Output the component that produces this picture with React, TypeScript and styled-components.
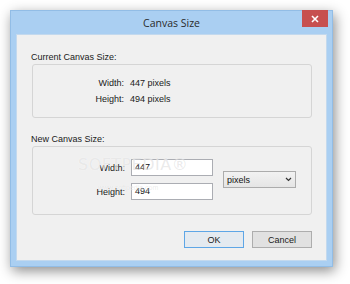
import styled, { createGlobalStyle } from 'styled-components'

const GlobalStyle = createGlobalStyle`
  html, body {
    margin: 0;
    padding: 0;
    background: #ffffff;
  }

  body {
    font-family: 'Liberation Sans', Arial, sans-serif;
  }
`

const Page = styled.div`
  width: 350px;
  height: 284px;
  padding: 10px 0 0 10px;
  box-sizing: border-box;
  overflow: hidden;
`

const Window = styled.div`
  position: relative;
  width: 323px;
  height: 257px;
  box-sizing: border-box;
  display: flex;
  flex-direction: column;
  background: #aacff2;
  border: 1px solid #92bde6;
  box-shadow: 2px 4px 12px rgba(0, 0, 0, 0.45);
`

const TitleBar = styled.div`
  height: 23px;
  display: grid;
  grid-template-columns: 1fr auto 1fr;
  align-items: start;
`

const Title = styled.div`
  grid-column: 2;
  padding-top: 5px;
  font-family: 'Open Sans', 'Noto Sans', sans-serif;
  font-size: 10.5px;
  line-height: 14px;
  color: #2b2b2b;
`

const CloseButton = styled.div`
  grid-column: 3;
  justify-self: end;
  width: 26px;
  height: 17px;
  margin-right: 4px;
  margin-top: -1px;
  background: #c75050;
  display: flex;
  align-items: center;
  justify-content: center;
`

const Client = styled.div`
  flex: 1;
  margin: 0 5px 5px 5px;
  padding: 15px 14px 0 15px;
  background: #f0f0f0;
  border: 1px solid #c3d9ee;
  box-sizing: border-box;
  display: flex;
  flex-direction: column;
  position: relative;
`

const SectionLabel = styled.div<{ $gap?: number }>`
  font-size: 9px;
  line-height: 14px;
  color: #1a1a1a;
  margin-left: -1px;
  margin-top: ${(p) => p.$gap ?? 0}px;
`

const Group = styled.div<{ $h: number; $pt: number }>`
  height: ${(p) => p.$h}px;
  box-sizing: border-box;
  border: 1px solid #d5d5d5;
  border-radius: 3px;
  padding-top: ${(p) => p.$pt}px;
`

const InfoGrid = styled.div`
  display: grid;
  grid-template-columns: 91px auto;
  column-gap: 6px;
  grid-auto-rows: 16px;
  align-items: center;
  font-size: 9px;
  color: #1a1a1a;
`

const RowLabel = styled.div`
  text-align: right;
`

const EditGrid = styled.div`
  display: grid;
  grid-template-columns: 92px 82px 77px;
  grid-template-rows: 17px 17px;
  column-gap: 6px;
  row-gap: 7px;
  align-items: center;
  font-size: 9px;
  color: #1a1a1a;
`

const TextBox = styled.div`
  height: 17px;
  box-sizing: border-box;
  background: #ffffff;
  border: 1px solid #abadb3;
  padding: 0 3px;
  line-height: 15px;
  font-size: 9px;
  color: #111;
`

const Select = styled.div`
  grid-column: 3;
  grid-row: 1 / span 2;
  margin-left: 4px;
  height: 17px;
  box-sizing: border-box;
  border: 1px solid #acacac;
  background: linear-gradient(#f2f2f2, #e5e5e5);
  padding: 0 3px;
  display: flex;
  align-items: center;
  justify-content: space-between;
  font-size: 9px;
  color: #111;
`

const ButtonRow = styled.div`
  display: flex;
  justify-content: flex-end;
  gap: 8px;
  margin-top: 16px;
`

const Button = styled.div<{ $default?: boolean }>`
  width: 60px;
  height: 17px;
  box-sizing: border-box;
  border: 1px solid ${(p) => (p.$default ? '#5ea6e6' : '#adadad')};
  background: ${(p) => (p.$default ? '#e4eaf0' : '#e1e1e1')};
  display: flex;
  align-items: center;
  justify-content: center;
  font-size: 9px;
  color: #1a1a1a;
`

const Watermark = styled.div`
  position: absolute;
  left: 61px;
  top: 122px;
  pointer-events: none;
  color: rgba(150, 150, 150, 0.2);
  text-shadow: 0 0 1px rgba(255, 255, 255, 0.9);
`

const WatermarkBig = styled.div`
  font-family: 'DejaVu Sans', sans-serif;
  font-size: 16px;
  letter-spacing: 0.5px;
  line-height: 16px;
`

const WatermarkSmall = styled.div`
  font-size: 7px;
  line-height: 8px;
  margin-left: 20px;
  margin-top: 11px;
`

const App = () => {
  return (
    <>
      <GlobalStyle />
      <Page>
        <Window>
          <TitleBar>
            <Title>Canvas Size</Title>
            <CloseButton>
              <svg width="8" height="8" viewBox="0 0 8 8">
                <path d="M1 1 L7 7 M7 1 L1 7" stroke="#fff" strokeWidth="1.6" />
              </svg>
            </CloseButton>
          </TitleBar>
          <Client>
            <SectionLabel>Current Canvas Size:</SectionLabel>
            <Group $h={54} $pt={10}>
              <InfoGrid>
                <RowLabel>Width:</RowLabel>
                <div>447 pixels</div>
                <RowLabel>Height:</RowLabel>
                <div>494 pixels</div>
              </InfoGrid>
            </Group>
            <SectionLabel $gap={14}>New Canvas Size:</SectionLabel>
            <Group $h={69} $pt={12}>
              <EditGrid>
                <RowLabel>Width:</RowLabel>
                <TextBox>447</TextBox>
                <Select>
                  <span>pixels</span>
                  <svg width="7" height="5" viewBox="0 0 7 5">
                    <path d="M1 1 L3.5 3.5 L6 1" stroke="#333" strokeWidth="1.2" fill="none" />
                  </svg>
                </Select>
                <RowLabel>Height:</RowLabel>
                <TextBox>494</TextBox>
              </EditGrid>
            </Group>
            <ButtonRow>
              <Button $default>OK</Button>
              <Button>Cancel</Button>
            </ButtonRow>
            <Watermark>
              <WatermarkBig>SOFTPEDIA®</WatermarkBig>
              <WatermarkSmall>www.softpedia.com</WatermarkSmall>
            </Watermark>
          </Client>
        </Window>
      </Page>
    </>
  )
}

export default App
